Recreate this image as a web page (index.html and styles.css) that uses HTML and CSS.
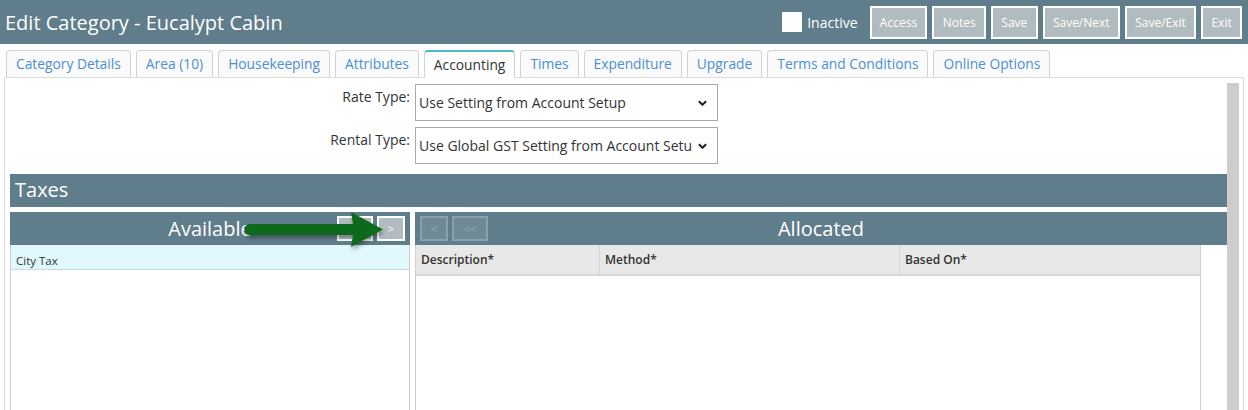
FILE: index.html
```html
<!DOCTYPE html>
<html lang="en">
<head>
  <meta charset="UTF-8" />
  <title>Edit Category - Eucalypt Cabin</title>
  <link rel="stylesheet" href="styles.css">
</head>
<body>
  <div class="topbar">
    <h1 class="page-title">Edit Category - Eucalypt Cabin</h1>
    <div class="actions">
      <label class="inactive"><span class="checkbox"></span>Inactive</label>
      <button class="action-btn">Access</button>
      <button class="action-btn">Notes</button>
      <button class="action-btn">Save</button>
      <button class="action-btn">Save/Next</button>
      <button class="action-btn">Save/Exit</button>
      <button class="action-btn">Exit</button>
    </div>
  </div>

  <div class="tabs">
    <div class="tab">Category Details</div>
    <div class="tab">Area (10)</div>
    <div class="tab">Housekeeping</div>
    <div class="tab">Attributes</div>
    <div class="tab active">Accounting</div>
    <div class="tab">Times</div>
    <div class="tab">Expenditure</div>
    <div class="tab">Upgrade</div>
    <div class="tab">Terms and Conditions</div>
    <div class="tab">Online Options</div>
  </div>

  <div class="panel">
    <div class="panel-main">
      <div class="form-grid">
        <label class="form-label">Rate Type:</label>
        <div class="select">
          <span class="select-text">Use Setting from Account Setup</span>
          <svg class="chevron" viewBox="0 0 10 6"><path d="M1 1 L5 5 L9 1" /></svg>
        </div>
        <label class="form-label">Rental Type:</label>
        <div class="select">
          <span class="select-text">Use Global GST Setting from Account Setup</span>
          <svg class="chevron" viewBox="0 0 10 6"><path d="M1 1 L5 5 L9 1" /></svg>
        </div>
      </div>

      <div class="section-title">Taxes</div>

      <div class="tax-columns">
        <div class="tax-box available">
          <div class="box-head">
            <span></span>
            <span class="box-title">Available</span>
            <div class="move-btns end">
              <button class="move-btn wide">&gt;&gt;</button>
              <button class="move-btn">&gt;</button>
            </div>
            <!-- annotation arrow -->
            <svg class="hint-arrow" viewBox="0 0 160 44">
              <defs>
                <filter id="shadow" x="-10%" y="-30%" width="120%" height="180%">
                  <feDropShadow dx="1" dy="3" stdDeviation="2" flood-color="#000" flood-opacity="0.35"/>
                </filter>
              </defs>
              <g filter="url(#shadow)">
                <path d="M7 13 L110 13 L108 1 L140 18.5 L108 36 L110 24 L7 24 A5.5 5.5 0 0 1 7 13 Z" fill="#0f6b1c"/>
              </g>
            </svg>
          </div>
          <div class="list-box">
            <div class="list-item selected">City Tax</div>
          </div>
        </div>

        <div class="tax-box allocated">
          <div class="box-head">
            <div class="move-btns">
              <button class="move-btn disabled">&lt;</button>
              <button class="move-btn wide disabled">&lt;&lt;</button>
            </div>
            <span class="box-title">Allocated</span>
            <span></span>
          </div>
          <div class="alloc-body">
            <div class="grid-table">
              <div class="grid-head">
                <div class="col desc">Description*</div>
                <div class="col method">Method*</div>
                <div class="col based">Based On*</div>
              </div>
            </div>
          </div>
        </div>
      </div>
    </div>
    <div class="scrollbar"></div>
  </div>
</body>
</html>
```

FILE: styles.css
```css
* {
  margin: 0;
  padding: 0;
  box-sizing: border-box;
}
body {
  font-family: "Open Sans", "Noto Sans", sans-serif;
  color: #333;
  background: #fff;
  height: 410px;
  overflow: hidden;
}
.topbar {
  height: 44px;
  background: #607d8b;
  display: flex;
  align-items: center;
  justify-content: space-between;
  padding: 0 6px 0 5px;
}
.page-title {
  font-size: 20px;
  font-weight: 400;
  color: #fff;
}
.actions {
  display: flex;
  align-items: center;
  gap: 5px;
}
.inactive {
  display: flex;
  align-items: center;
  gap: 5px;
  color: #fff;
  font-size: 14px;
  margin-right: 7px;
}
.checkbox {
  width: 20px;
  height: 20px;
  background: #fff;
  border-radius: 1px;
}
.action-btn {
  height: 33px;
  padding: 0 8.3px;
  border: 2px solid #fff;
  background: #b0bcc0;
  color: #fff;
  font-family: inherit;
  font-size: 12px;
}
.tabs {
  display: flex;
  gap: 5px;
  padding: 6px 0 0 6px;
  height: 33px;
}
.tab {
  height: 27px;
  padding: 0 9px;
  border: 1px solid #d2d2d2;
  border-bottom: none;
  border-radius: 4px 4px 0 0;
  background: #fafafa;
  color: #4a90d2;
  font-size: 13.8px;
  line-height: 26px;
  white-space: nowrap;
}
.tab.active {
  background: #fff;
  color: #333;
  border-top: 2px solid #4dbac6;
  line-height: 25px;
  height: 28px;
  margin-bottom: -1px;
}
.panel {
  margin: 0 4px;
  border: 1px solid #dcdcdc;
  display: flex;
  height: 340px;
}
.panel-main {
  flex: 1;
  padding: 6px 0 0 5px;
}
.scrollbar {
  width: 12px;
  margin: 5px 4px 0 0;
  background: #cdcdcd;
}
.form-grid {
  display: grid;
  grid-template-columns: 400px 303px;
  column-gap: 5px;
  row-gap: 6px;
}
.form-label {
  text-align: right;
  font-size: 14px;
  padding-top: 3px;
}
.select {
  height: 37px;
  border: 1px solid #a9a9a9;
  display: flex;
  align-items: center;
  padding: 0 10px 0 3px;
  font-size: 14px;
  gap: 6px;
}
.select-text {
  flex: 1;
  white-space: nowrap;
  overflow: hidden;
}
.chevron {
  width: 9px;
  height: 6px;
  fill: none;
  stroke: #222;
  stroke-width: 2.2;
}
.section-title {
  margin-top: 10px;
  height: 33px;
  background: #607d8b;
  color: #fff;
  font-size: 20px;
  line-height: 32px;
  padding-left: 5px;
}
.tax-columns {
  display: flex;
  gap: 5px;
  margin-top: 5px;
}
.tax-box.available {
  width: 400px;
}
.tax-box.allocated {
  flex: 1;
}
.box-head {
  position: relative;
  height: 33px;
  background: #607d8b;
  display: grid;
  grid-template-columns: 1fr auto 1fr;
  align-items: center;
  padding: 0 5px;
}
.box-title {
  color: #fff;
  font-size: 20px;
}
.move-btns {
  display: flex;
  gap: 4px;
}
.move-btns.end {
  justify-self: end;
}
.move-btn {
  width: 28px;
  height: 25px;
  border: 2px solid #fff;
  background: #b0bcc0;
  color: #fff;
  font-family: inherit;
  font-size: 11px;
}
.move-btn.wide {
  width: 36px;
}
.move-btn.disabled {
  background: #6f8a96;
  border-color: #8aa0aa;
  color: #93a8b1;
}
.hint-arrow {
  position: absolute;
  left: 233px;
  top: -1px;
  width: 160px;
  height: 44px;
}
.list-box {
  height: 200px;
  border: 1px solid #cfcfcf;
  border-top: none;
}
.list-item {
  height: 25px;
  padding: 9px 0 0 5px;
  font-size: 11.5px;
  line-height: 14px;
}
.list-item.selected {
  background: #e1f8fd;
  border-bottom: 1px solid #bfdde5;
}
.alloc-body {
  padding-right: 26px;
}
.grid-table {
  height: 200px;
  border: 1px solid #cfcfcf;
  border-top: none;
}
.grid-head {
  display: flex;
  height: 31px;
  background: #e8e8e8;
  border-bottom: 2px solid #d8d8d8;
}
.col {
  font-size: 12px;
  font-weight: 600;
  padding-left: 5px;
  line-height: 29px;
}
.col.desc {
  width: 183px;
}
.col.method {
  width: 300px;
  border-left: 1px solid #d4d4d4;
}
.col.based {
  flex: 1;
  border-left: 1px solid #d4d4d4;
}
```
